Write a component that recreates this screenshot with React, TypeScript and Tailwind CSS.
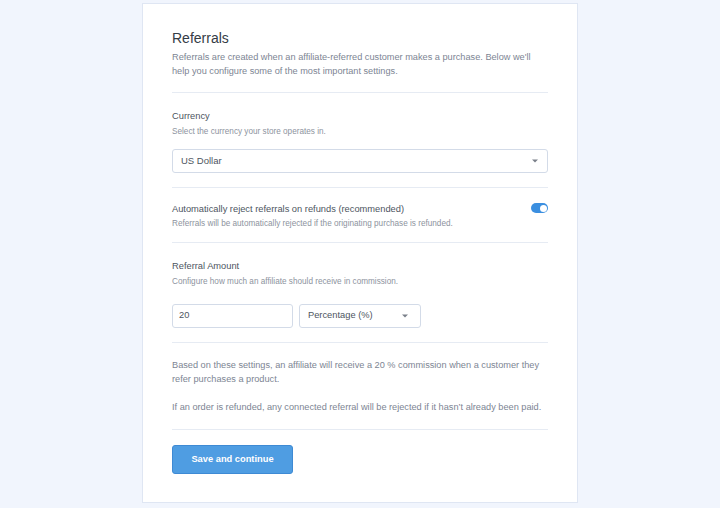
export default function App() {
  return (
    <div
      className="min-h-[508px] w-full bg-[#f1f5fd] pt-[3px]"
      style={{ fontFamily: '"Liberation Sans", Arial, sans-serif' }}
    >
      <div className="mx-auto w-[436px] border border-[#dfe6f3] bg-white px-[29px] pt-[25px] pb-[28px]">
        {/* Header */}
        <h1 className="text-[14px] leading-[18px] text-[#343c46]">Referrals</h1>
        <p className="mt-[3px] text-[9.2px] leading-[14px] text-[#7d8593]">
          Referrals are created when an affiliate-referred customer makes a purchase. Below we'll
          help you configure some of the most important settings.
        </p>

        {/* Currency */}
        <div className="mt-[14px] border-t border-[#e6ebf3] pt-[16px] pb-[14px]">
          <div className="text-[9.3px] leading-[14px] text-[#4d5561]">Currency</div>
          <div className="mt-[3px] text-[8.2px] leading-[12px] text-[#8d939e]">
            Select the currency your store operates in.
          </div>
          <div className="mt-[11px] flex h-[24px] items-center justify-between rounded-[3px] border border-[#d3dbe8] pr-[9px] pl-[8px] text-[9.5px] text-[#4d5561]">
            <span>US Dollar</span>
            <Caret />
          </div>
        </div>

        {/* Auto reject */}
        <div className="flex items-start justify-between border-t border-[#e6ebf3] pt-[14px] pb-[12px]">
          <div>
            <div className="text-[9.3px] leading-[14px] text-[#4d5561]">
              Automatically reject referrals on refunds (recommended)
            </div>
            <div className="mt-[2px] text-[8.2px] leading-[12px] text-[#8d939e]">
              Referrals will be automatically rejected if the originating purchase is refunded.
            </div>
          </div>
          <div className="mt-[1px] flex h-[10px] w-[17px] items-center justify-end rounded-full bg-[#3b8fe0] px-[1.5px]">
            <div className="h-[7px] w-[7px] rounded-full bg-white" />
          </div>
        </div>

        {/* Referral amount */}
        <div className="border-t border-[#e6ebf3] pt-[16px] pb-[14px]">
          <div className="text-[9.3px] leading-[14px] text-[#4d5561]">Referral Amount</div>
          <div className="mt-[3px] text-[8.2px] leading-[12px] text-[#8d939e]">
            Configure how much an affiliate should receive in commission.
          </div>
          <div className="mt-[16px] flex gap-[6px]">
            <div className="flex h-[24px] w-[121px] items-center rounded-[3px] border border-[#d3dbe8] px-[6px] text-[9.3px] text-[#4d5561]">
              20
            </div>
            <div className="flex h-[24px] w-[122px] items-center justify-between rounded-[3px] border border-[#d3dbe8] pr-[12px] pl-[8px] text-[9.3px] text-[#4d5561]">
              <span>Percentage (%)</span>
              <Caret />
            </div>
          </div>
        </div>

        {/* Summary */}
        <div className="border-t border-[#e6ebf3] pt-[15px] pb-[15px] text-[9.2px] leading-[14px] text-[#7d8593]">
          <p>
            Based on these settings, an affiliate will receive a 20 % commission when a customer they
            refer purchases a product.
          </p>
          <p className="mt-[14px]">
            If an order is refunded, any connected referral will be rejected if it hasn’t already been paid.
          </p>
        </div>

        {/* Action */}
        <div className="border-t border-[#e6ebf3] pt-[15px]">
          <button className="h-[29px] w-[121px] rounded-[3px] border border-[#3e8ad4] bg-[#4f9de2] text-[9.3px] font-bold text-white">
            Save and continue
          </button>
        </div>
      </div>
    </div>
  );
}

function Caret() {
  return (
    <svg width="6" height="4" viewBox="0 0 6 4" className="shrink-0">
      <path d="M0 0.5 L6 0.5 L3 3.5 Z" fill="#7a808a" />
    </svg>
  );
}
